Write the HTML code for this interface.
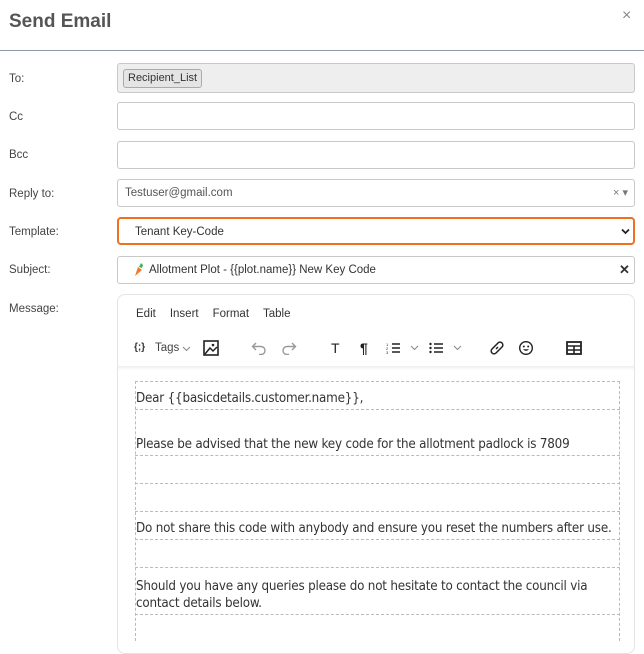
<!DOCTYPE html>
<html><head><meta charset="utf-8"><style>
*{box-sizing:border-box;margin:0;padding:0}
body{width:644px;height:636px;overflow:hidden;background:#fff;font-family:"Liberation Sans",sans-serif;color:#333;position:relative}
.abs{position:absolute}
.lbl{position:absolute;left:9px;font-size:11.5px;color:#444}
.fld{position:absolute;left:117px;width:518px;height:28px;border:1px solid #c8c8c8;border-radius:3px;background:#fff;font-size:11.5px;color:#333}
.dl{position:absolute;left:135px;width:485px;border-top:1px dashed #bbb}
.tx{position:absolute;left:136px;font-size:13.3px;color:#333;font-family:"DejaVu Sans Condensed","Liberation Sans",sans-serif;letter-spacing:-0.2px}
.ic{position:absolute;top:340px}
</style></head><body>
<div class="abs" style="left:9px;top:11px;font-size:19px;font-weight:bold;color:#555">Send Email</div>
<div class="abs" style="left:622px;top:7px;font-size:16px;color:#888">×</div>
<div class="abs" style="left:0;top:50px;width:644px;height:1px;background:#8d9aaa"></div>

<div class="lbl" style="top:73px">To:</div>
<div class="fld" style="top:63px;height:30px;background:#eee"><div class="abs" style="left:5px;top:5px;height:19px;padding:0 4px;border:1px solid #aaa;border-radius:3px;background:#e4e4e4;font-size:11px;line-height:17px">Recipient_List</div></div>
<div class="lbl" style="top:111px">Cc</div>
<div class="fld" style="top:102px"></div>
<div class="lbl" style="top:149px">Bcc</div>
<div class="fld" style="top:141px"></div>
<div class="lbl" style="top:188px">Reply to:</div>
<div class="fld" style="top:179px"><span class="abs" style="left:7px;top:7px;color:#555">Testuser@gmail.com</span><span class="abs" style="left:495px;top:6px;font-size:11px;color:#777">× ▾</span></div>
<div class="lbl" style="top:226px">Template:</div>
<div class="fld" style="top:217px;border:2px solid #f07020;border-radius:4px"><span class="abs" style="left:16px;top:7px">Tenant Key-Code</span><svg class="abs" style="left:502px;top:9px" width="9" height="7" viewBox="0 0 9 7"><path d="M1 1.5L4.5 5L8 1.5" stroke="#222" stroke-width="1.8" fill="none"/></svg></div>
<div class="lbl" style="top:264px">Subject:</div>
<div class="fld" style="top:256px"><svg class="abs" style="left:15px;top:6px" width="12" height="14" viewBox="0 0 12 14"><path d="M2 13L5 4L9 7Z" fill="#f07a2a"/><path d="M6 4L8 0L10 2L9 5Z" fill="#3bb55a"/></svg><span class="abs" style="left:31px;top:7px">Allotment Plot - {{plot.name}} New Key Code</span><span class="abs" style="left:501px;top:5px;font-size:13px;font-weight:bold">✕</span></div>
<div class="lbl" style="top:303px">Message:</div>

<div class="abs" style="left:117px;top:294px;width:518px;height:360px;border:1px solid #e3e3e3;border-radius:8px"></div>
<div class="abs" style="left:118px;top:308px;font-size:11.5px;color:#333"><span style="margin-left:18px">Edit</span><span style="margin-left:14px">Insert</span><span style="margin-left:14px">Format</span><span style="margin-left:14px">Table</span></div>
<div class="abs" style="left:118px;top:366px;width:516px;height:4px;background:linear-gradient(#eee,#fff)"></div>

<span class="ic" style="left:134px;top:342px;font-size:10px;font-weight:bold">{;}</span>
<span class="ic" style="left:155px;top:342px;font-size:11.5px;color:#444">Tags</span>
<svg class="ic" style="left:182px;top:346px" width="9" height="6"><path d="M1 1L4.5 4.5L8 1" stroke="#888" fill="none"/></svg>
<svg class="ic" style="left:203px;top:340px" width="16" height="16" viewBox="0 0 16 16"><rect x="1" y="1" width="14" height="14" fill="none" stroke="#222" stroke-width="1.6"/><path d="M2 14L7 8L10 11L14 7" stroke="#222" stroke-width="1.5" fill="none"/><circle cx="10" cy="5" r="1.3" fill="#222"/></svg>
<svg class="ic" style="left:251px;top:341px" width="16" height="14" viewBox="0 0 16 14"><path d="M5 2L1.5 5.5L5 9M1.5 5.5H10a4 4 0 0 1 0 8H8" stroke="#999" stroke-width="1.4" fill="none"/></svg>
<svg class="ic" style="left:281px;top:341px" width="16" height="14" viewBox="0 0 16 14"><path d="M11 2L14.5 5.5L11 9M14.5 5.5H6a4 4 0 0 0 0 8H8" stroke="#999" stroke-width="1.4" fill="none"/></svg>
<span class="ic" style="left:331px;top:340px;font-size:14px;color:#222">T</span>
<span class="ic" style="left:360px;top:340px;font-size:14px;font-weight:bold;color:#222">¶</span>
<svg class="ic" style="left:386px;top:341px" width="15" height="14" viewBox="0 0 15 14"><path d="M6 3H14M6 7H14M6 11H14" stroke="#222" stroke-width="1.5"/><text x="0" y="5" font-size="4" fill="#222">1</text><text x="0" y="9" font-size="4" fill="#222">2</text><text x="0" y="13" font-size="4" fill="#222">3</text></svg>
<svg class="ic" style="left:410px;top:345px" width="9" height="6"><path d="M1 1L4.5 4.5L8 1" stroke="#888" fill="none"/></svg>
<svg class="ic" style="left:429px;top:341px" width="15" height="14" viewBox="0 0 15 14"><path d="M5 3H14M5 7H14M5 11H14" stroke="#222" stroke-width="1.5"/><circle cx="1.5" cy="3" r="1.2" fill="#222"/><circle cx="1.5" cy="7" r="1.2" fill="#222"/><circle cx="1.5" cy="11" r="1.2" fill="#222"/></svg>
<svg class="ic" style="left:453px;top:345px" width="9" height="6"><path d="M1 1L4.5 4.5L8 1" stroke="#888" fill="none"/></svg>
<svg class="ic" style="left:489px;top:340px" width="16" height="16" viewBox="0 0 16 16"><path d="M7 9L9 7M6 6L3 9a2.5 2.5 0 0 0 4 4L10 10M10 10L13 7a2.5 2.5 0 0 0-4-4L6 6" stroke="#222" stroke-width="1.5" fill="none"/></svg>
<svg class="ic" style="left:518px;top:340px" width="16" height="16" viewBox="0 0 16 16"><circle cx="8" cy="8" r="6.3" stroke="#222" stroke-width="1.4" fill="none"/><circle cx="5.8" cy="6.5" r="1" fill="#222"/><circle cx="10.2" cy="6.5" r="1" fill="#222"/><path d="M5 9.3Q8 12.5 11 9.3Z" fill="#222"/></svg>
<svg class="ic" style="left:566px;top:341px" width="16" height="14" viewBox="0 0 16 14"><rect x="1" y="1" width="14" height="12" fill="none" stroke="#222" stroke-width="1.8"/><path d="M1 5H15M8 5V13M1 9H15" stroke="#222" stroke-width="1.6"/></svg>

<div class="abs" style="left:135px;top:381px;width:485px;height:260px;border-left:1px dashed #bbb;border-right:1px dashed #bbb"></div>
<div class="dl" style="top:381px"></div>
<div class="tx" style="top:391px">Dear {{basicdetails.customer.name}},</div>
<div class="dl" style="top:409px"></div>
<div class="tx" style="top:437px">Please be advised that the new key code for the allotment padlock is 7809</div>
<div class="dl" style="top:455px"></div>
<div class="dl" style="top:483px"></div>
<div class="dl" style="top:511px"></div>
<div class="tx" style="top:521px">Do not share this code with anybody and ensure you reset the numbers after use.</div>
<div class="dl" style="top:539px"></div>
<div class="dl" style="top:567px"></div>
<div class="tx" style="top:578px;line-height:17px">Should you have any queries please do not hesitate to contact the council via<br>contact details below.</div>
<div class="dl" style="top:614px"></div>
</body></html>
